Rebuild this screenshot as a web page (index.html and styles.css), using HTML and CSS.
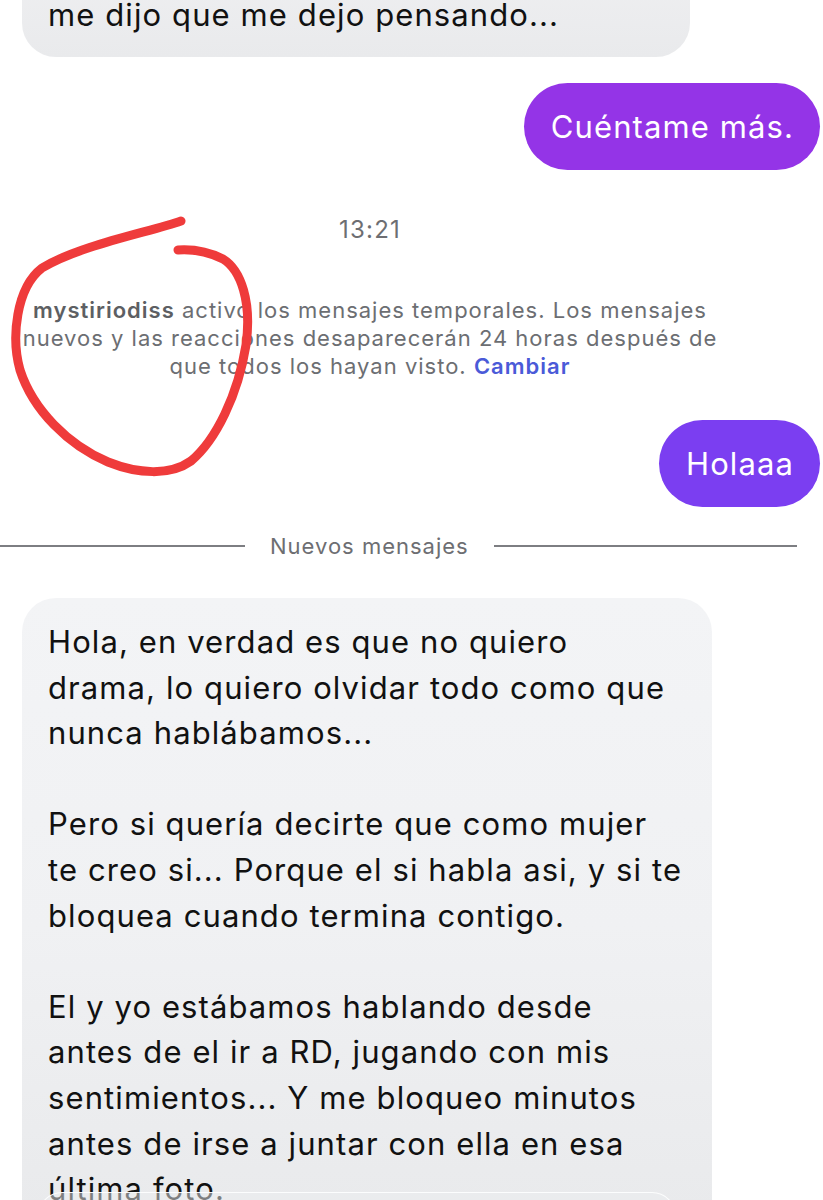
FILE: index.html
```html
<!DOCTYPE html>
<html lang="es">
<head>
  <meta charset="UTF-8">
  <meta name="viewport" content="width=device-width, initial-scale=1.0">
  <title>Chat</title>
  <link rel="stylesheet" href="styles.css">
</head>
<body>
  <div class="chat">
    <div class="bubble bubble-in bubble-top">me dijo que me dejo pensando...</div>

    <div class="bubble bubble-out out-purple">Cuéntame más.</div>

    <div class="timestamp">13:21</div>

    <div class="system-note">
      <b>mystiriodiss</b> activó los mensajes temporales. Los mensajes<br>
      nuevos y las reacciones desaparecerán 24 horas después de<br>
      que todos los hayan visto. <a href="#" class="system-link">Cambiar</a>
    </div>

    <div class="bubble bubble-out out-violet">Holaaa</div>

    <div class="divider">
      <span class="divider-line divider-left"></span>
      <span class="divider-text">Nuevos mensajes</span>
      <span class="divider-line divider-right"></span>
    </div>

    <div class="bubble bubble-in bubble-long">
      <p>Hola, en verdad es que no quiero<br>drama, lo quiero olvidar todo como que<br>nunca hablábamos...</p>
      <p>Pero si quería decirte que como mujer<br>te creo si... Porque el si habla asi, y si te<br>bloquea cuando termina contigo.</p>
      <p>El y yo estábamos hablando desde<br>antes de el ir a RD, jugando con mis<br>sentimientos... Y me bloqueo minutos<br>antes de irse a juntar con ella en esa<br>última foto.</p>
    </div>
  </div>

  <!-- bottom overlay peeking in -->
  <div class="composer"></div>

  <!-- hand drawn annotation -->
  <svg class="scribble" width="823" height="1200" viewBox="0 0 823 1200">
    <path d="M181,221 C150,232 80,245 42,268 C16,288 11,338 20,370 C33,410 68,445 108,462 C138,474 170,476 191,461 C216,440 238,395 246,345 C252,302 241,270 223,259 C209,252 193,249 178,250"
          fill="none" stroke="#ef3b3b" stroke-width="9" stroke-linecap="round" stroke-linejoin="round"/>
  </svg>
</body>
</html>
```

FILE: styles.css
```css
/* Page */
body {
  margin: 0;
  width: 823px;
  height: 1200px;
  overflow: hidden;
  position: relative;
  background: #fff;
  font-family: 'Inter', 'Noto Sans', sans-serif;
  color: #111;
}

.chat {
  display: flex;
  flex-direction: column;
}

/* Bubbles */
.bubble {
  box-sizing: border-box;
  font-size: 31px;
  letter-spacing: 1.1px;
  line-height: 44px;
}

.bubble-in {
  align-self: flex-start;
  margin-left: 22px;
  background: #eeeef0;
  border-radius: 34px;
  padding: 20px 26px;
}

.bubble-top {
  width: 668px;
  margin-top: -67px;
  padding-top: 60px;
  background: linear-gradient(#f1f1f3, #e9eaec);
}

.bubble-long {
  width: 690px;
  margin-top: 38px;
  padding: 21px 26px 40px;
  line-height: 45.6px;
  background: linear-gradient(#f3f4f6 0%, #f0f1f3 50%, #e8e9eb 100%);
}

.bubble-long p {
  margin: 0;
}

.bubble-long p + p {
  margin-top: 45.6px;
}

.bubble-out {
  align-self: flex-end;
  margin-right: 3px;
  padding: 21.5px 26px 21.5px 27px;
  border-radius: 44px;
  color: #fff;
}

.out-purple {
  margin-top: 26px;
  background: #9434e7;
}

.out-violet {
  margin-top: 40px;
  background: #7b3ef1;
}

/* Timestamp + system note */
.timestamp {
  width: 740px;
  margin-top: 46px;
  text-align: center;
  font-size: 24px;
  letter-spacing: 1.2px;
  line-height: 28px;
  color: #6d6e72;
}

.system-note {
  width: 740px;
  margin-top: 52px;
  text-align: center;
  font-size: 22px;
  letter-spacing: 1px;
  line-height: 28px;
  color: #6c6e72;
}

.system-note b {
  font-weight: 600;
  color: #5d5f63;
}

.system-link {
  font-weight: 600;
  color: #4a5ad8;
  text-decoration: none;
}

/* New messages divider */
.divider {
  display: flex;
  align-items: center;
  gap: 25px;
  margin-top: 25px;
  padding-right: 26px;
  height: 28px;
}

.divider-line {
  height: 1.5px;
  background: #7d7e82;
}

.divider-left {
  flex: 0 0 245px;
}

.divider-right {
  flex: 1;
}

.divider-text {
  font-size: 22px;
  letter-spacing: 1px;
  color: #6d6e72;
}

/* Overlays */
.composer {
  position: absolute;
  left: 38px;
  top: 1192px;
  width: 636px;
  height: 50px;
  border: 1.5px solid rgba(255, 255, 255, 0.9);
  border-radius: 24px;
  background: rgba(236, 237, 239, 0.5);
}

.scribble {
  position: absolute;
  left: 0;
  top: 0;
  pointer-events: none;
}
```
